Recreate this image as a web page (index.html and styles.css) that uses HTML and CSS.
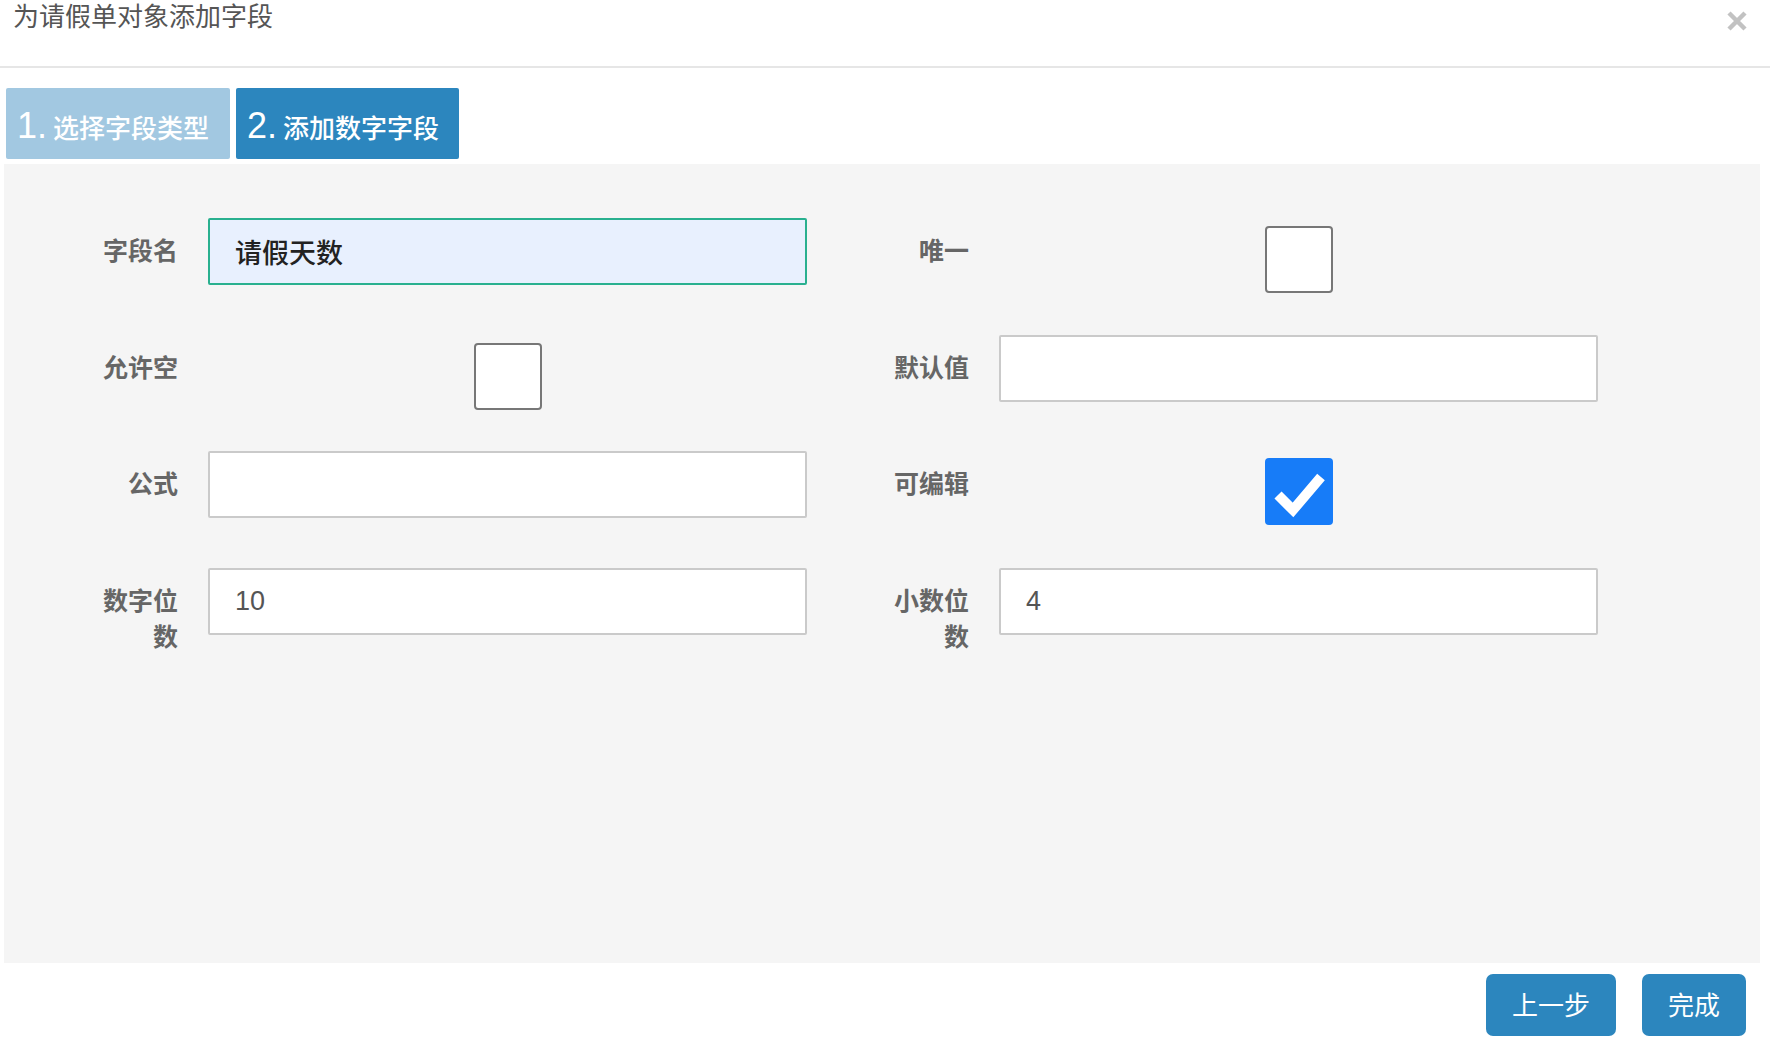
FILE: index.html
```html
<!DOCTYPE html>
<html>
<head>
    <meta charset="utf-8">
    <title>为请假单对象添加字段</title>

    <link rel="stylesheet" href="styles.css">
</head>
<body>
    <div class="modal">
        <div class="modal-header">
            <h4 class="modal-title">为请假单对象添加字段</h4>
            <button class="close" type="button">
                <svg width="20" height="20" viewBox="0 0 20 20">
                    <path d="M2 2 L18 18 M18 2 L2 18" stroke="#c2c2c2" stroke-width="4.5"/>
                </svg>
            </button>
        </div>

        <div class="modal-body">
            <div class="steps">
                <div class="step done"><span class="num">1.</span>选择字段类型</div>
                <div class="step active"><span class="num">2.</span>添加数字字段</div>
            </div>

            <div class="step-panel">
                <div class="field-form">
                    <div class="field">
                        <label>字段名</label>
                        <div class="control"><input type="text" class="text-box focused" value="请假天数"></div>
                    </div>
                    <div class="field">
                        <label>唯一</label>
                        <div class="control center"><span class="check"></span></div>
                    </div>

                    <div class="field">
                        <label>允许空</label>
                        <div class="control center"><span class="check"></span></div>
                    </div>
                    <div class="field">
                        <label>默认值</label>
                        <div class="control"><input type="text" class="text-box" value=""></div>
                    </div>

                    <div class="field">
                        <label>公式</label>
                        <div class="control"><input type="text" class="text-box" value=""></div>
                    </div>
                    <div class="field">
                        <label>可编辑</label>
                        <div class="control center">
                            <span class="check checked">
                                <svg width="68" height="68" viewBox="0 0 68 68">
                                    <polyline points="13,37 28,52 56,19" fill="none" stroke="#fff" stroke-width="10"/>
                                </svg>
                            </span>
                        </div>
                    </div>

                    <div class="field">
                        <label>数字位数</label>
                        <div class="control"><input type="text" class="text-box number" value="10"></div>
                    </div>
                    <div class="field">
                        <label>小数位数</label>
                        <div class="control"><input type="text" class="text-box number" value="4"></div>
                    </div>
                </div>
            </div>
        </div>

        <div class="modal-footer">
            <button type="button" class="btn">上一步</button>
            <button type="button" class="btn">完成</button>
        </div>
    </div>
</body>
</html>
```

FILE: styles.css
```css
body {
    margin: 0;
    background: #fff;
    font-family: "Liberation Sans", "Noto Sans CJK SC", sans-serif;
}

.modal {
    width: 1770px;
    height: 1052px;
    overflow: hidden;
}

.modal-header {
    display: flex;
    justify-content: space-between;
    align-items: flex-start;
    height: 66px;
    border-bottom: 2px solid #e6e6e6;
}

.modal-title {
    margin: 0;
    padding-left: 13px;
    font-size: 26px;
    font-weight: normal;
    line-height: 34px;
    color: #555;
}

.close {
    margin: 11px 23px 0 0;
    padding: 0;
    border: none;
    background: none;
    width: 20px;
    height: 20px;
}

.close svg {
    display: block;
}

.modal-body {
    padding: 20px 10px 0 4px;
}

.steps {
    display: flex;
    gap: 6px;
    margin-left: 2px;
}

.step {
    box-sizing: border-box;
    height: 71px;
    padding: 18px 0 0 11px;
    border-radius: 2px;
    color: #fff;
    font-size: 26px;
    font-weight: 500;
    line-height: 40px;
    white-space: nowrap;
}

.step.done {
    width: 224px;
    background: #a2c8e1;
}

.step.active {
    width: 223px;
    background: #2c86be;
}

.step .num {
    font-size: 36px;
    font-weight: normal;
    margin-right: 6px;
}

.step-panel {
    box-sizing: border-box;
    height: 799px;
    margin-top: 5px;
    padding: 54px 0 0 21px;
    background: #f5f5f5;
}

.field-form {
    display: grid;
    grid-template-columns: 783px 783px;
    column-gap: 8px;
    row-gap: 49.5px;
}

.field {
    display: flex;
    align-items: flex-start;
}

.field label {
    box-sizing: border-box;
    flex: none;
    width: 153px;
    margin-right: 30px;
    padding: 15px 0 0 70px;
    text-align: right;
    font-size: 25px;
    font-weight: bold;
    line-height: 36px;
    color: #666;
}

.control {
    width: 599px;
    height: 67px;
}

.control.center {
    display: flex;
    justify-content: center;
}

.text-box {
    box-sizing: border-box;
    width: 100%;
    height: 67px;
    margin: 0;
    padding: 0 25px;
    border: 2px solid #cacaca;
    border-radius: 2px;
    background: #fff;
    font-family: "Liberation Sans", "Noto Sans CJK SC", sans-serif;
    font-size: 27px;
    color: #222;
    outline: none;
}

.text-box.focused {
    border-color: #29b08f;
    background: #e8f0fe;
    font-weight: 500;
}

.text-box.number {
    color: #555;
}

.check {
    box-sizing: border-box;
    display: block;
    width: 68px;
    height: 67px;
    margin-top: 8px;
    border: 2px solid #777;
    border-radius: 4px;
    background: #fff;
}

.check.checked {
    border: none;
    background: #177cf8;
    margin-top: 7px;
}

.check svg {
    display: block;
}

.modal-footer {
    display: flex;
    justify-content: flex-end;
    gap: 26px;
    padding: 11px 24px 0 0;
}

.btn {
    height: 62px;
    padding: 0 26px 3px;
    border: none;
    border-radius: 7px;
    background: #2c86be;
    color: #fff;
    font-family: "Liberation Sans", "Noto Sans CJK SC", sans-serif;
    font-size: 26px;
}
```
